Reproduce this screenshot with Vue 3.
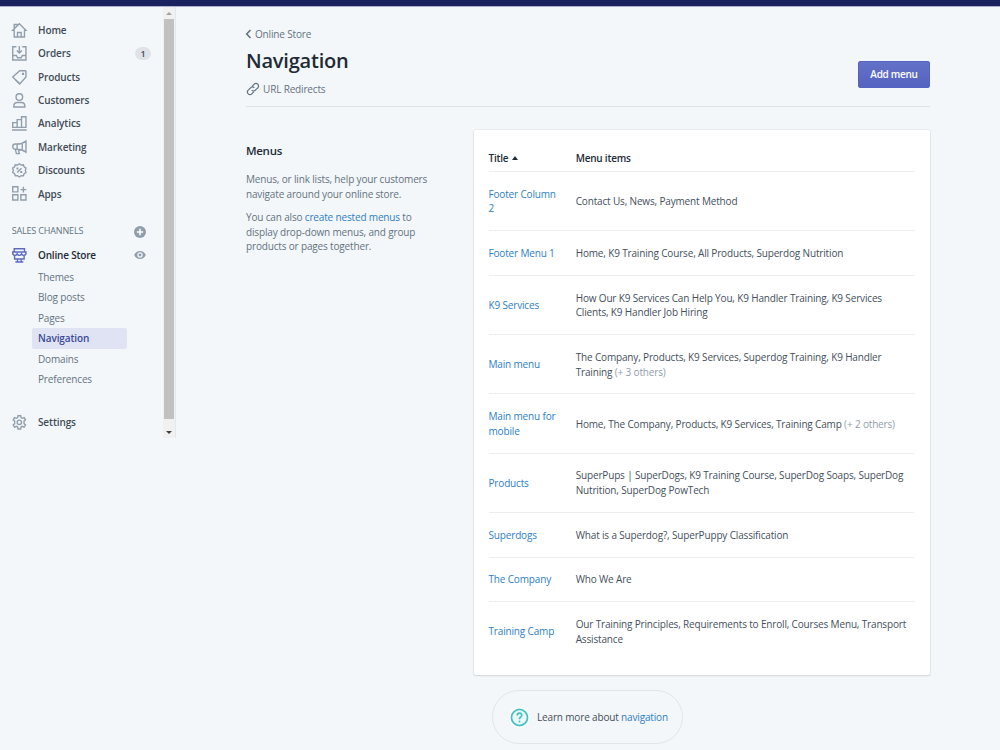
<template>
  <div class="app">
    <div class="topbar"></div>
    <div class="layout">
      <aside class="sidebar">
        <nav class="nav">
          <a class="nav-item" v-for="item in navList" :key="item.label">
            <svg class="nav-icon" viewBox="0 0 20 20">
              <path v-for="(d, i) in item.paths" :key="i" :d="d" />
            </svg>
            <span class="nav-label">{{ item.label }}</span>
            <span class="badge" v-if="item.badge">{{ item.badge }}</span>
          </a>

          <div class="section-title">
            <span>SALES CHANNELS</span>
            <svg class="small-icon" viewBox="0 0 16 16">
              <circle cx="8" cy="8" r="8" fill="#919eab" />
              <path d="M8 3.800v8.400M3.800 8h8.400" stroke="#fff" stroke-width="2" />
            </svg>
          </div>

          <a class="nav-item active">
            <svg class="nav-icon" viewBox="0 0 20 20">
              <path d="M3 1h14v4.500H3zM3 5.500H1V8q1 2 3 2t3-2q1 2 3 2t3-2q1 2 3 2t3-2V5.500h-2M3.500 10.500V15h13v-4.500M7.500 15v4M12.500 15v4M4.500 19h11" />
            </svg>
            <span class="nav-label">Online Store</span>
            <svg class="eye-icon" viewBox="0 0 18 14">
              <path fill="#919eab" fill-rule="evenodd" d="M9 1C4.500 1 1.500 4 .3 7c1.200 3 4.200 6 8.700 6s7.500-3 8.700-6C16.500 4 13.500 1 9 1zm0 10a4 4 0 1 1 0-8 4 4 0 0 1 0 8z" />
              <circle cx="9" cy="7" r="2.200" fill="#919eab" />
            </svg>
          </a>
          <div class="sub-nav">
            <a
              class="sub-item"
              v-for="item in subList"
              :key="item"
              :class="{ selected: item === 'Navigation' }"
              >{{ item }}</a
            >
          </div>

          <a class="nav-item settings">
            <svg class="nav-icon" viewBox="0 0 20 20">
              <path d="M8.200 1h3.600l.5 2.600 1.700.9 2.500-1 1.900 3-2 1.700v3.600l2 1.700-1.900 3-2.500-1-1.700.9-.5 2.600H8.200l-.5-2.600-1.700-.9-2.500 1-1.900-3 2-1.700V8.200l-2-1.700 1.900-3 2.500 1 1.700-.9z" />
              <circle cx="10" cy="10" r="3" />
            </svg>
            <span class="nav-label">Settings</span>
          </a>
        </nav>
        <div class="scrollbar">
          <i class="arrow up"></i>
          <div class="thumb"></div>
          <i class="arrow down"></i>
        </div>
      </aside>

      <main class="main">
        <header class="header">
          <div>
            <a class="breadcrumb">
              <svg class="chevron" viewBox="0 0 6 10">
                <path d="M5 1L1.200 5 5 9" />
              </svg>
              <span>Online Store</span>
            </a>
            <h1>Navigation</h1>
            <a class="redirects">
              <svg class="link-icon" viewBox="0 0 20 20">
                <path d="M9 5l3-3a3.800 3.800 0 0 1 6 6l-4 4a3.800 3.800 0 0 1-6 0M11 15l-3 3a3.800 3.800 0 0 1-6-6l4-4a3.800 3.800 0 0 1 6 0" />
              </svg>
              <span>URL Redirects</span>
            </a>
          </div>
          <button class="btn">Add menu</button>
        </header>

        <section class="content">
          <div class="description">
            <h2>Menus</h2>
            <p>Menus, or link lists, help your customers<br />navigate around your online store.</p>
            <p>
              You can also <a class="link">create nested menus</a> to<br />display drop-down menus, and
              group<br />products or pages together.
            </p>
          </div>

          <div class="card">
            <div class="row head">
              <div>Title <i class="sort"></i></div>
              <div>Menu items</div>
            </div>
            <div class="row" v-for="menu in menus" :key="menu.title">
              <a class="link title">{{ menu.title }}</a>
              <div class="items">
                <div v-for="(line, i) in menu.items" :key="i">
                  <span>{{ line }}</span>
                  <span class="others" v-if="menu.others && i === menu.items.length - 1"
                    >&nbsp;{{ menu.others }}</span
                  >
                </div>
              </div>
            </div>
          </div>
        </section>

        <footer class="help">
          <svg class="help-icon" viewBox="0 0 24 24">
            <circle cx="12" cy="12" r="12" fill="#fff" />
            <circle cx="12" cy="12" r="9.200" fill="#e9f8f7" stroke="#47c1bf" stroke-width="2" />
            <path d="M9.400 9.800Q9.400 7 12 7t2.600 2.500Q14.600 11 13 11.800q-1 .5-1 2.200" fill="none" stroke="#47c1bf" stroke-width="1.900" />
            <circle cx="12" cy="16.600" r="1.100" fill="#47c1bf" />
          </svg>
          <span>Learn more about <a class="link">navigation</a></span>
        </footer>
      </main>
    </div>
  </div>
</template>

<script setup>
import { ref } from "vue";

const navList = ref([
  {
    label: "Home",
    paths: ["M1 10l9-9 9 9h-2v9H3v-9zM3 8V2h4v2M7.500 19v-6h5v6"],
  },
  {
    label: "Orders",
    badge: 1,
    paths: ["M6 1H1v18h18V1h-5M1 13h5l1.500 3h5l1.500-3h5", "M10 0v9M6.500 6l3.500 3.500L13.500 6"],
  },
  {
    label: "Products",
    paths: ["M1 9.500L10.500 1H18q1 0 1 1v7.500L10.500 19z", "M5 13.500L11 19M14.500 4.700h1v1h-1z"],
  },
  {
    label: "Customers",
    paths: ["M10 1a4.500 4.500 0 1 0 0 9 4.500 4.500 0 0 0 0-9z", "M2.500 19v-2Q3 13 7 13h6q4 0 4.500 4v2z"],
  },
  {
    label: "Analytics",
    paths: ["M1 15.500V9h6v6.500zM7 15.500V5h6v10.500zM13 15.500V1h6v14.500zM0 19h20"],
  },
  {
    label: "Marketing",
    paths: ["M7 5.500H4.500a3.500 3.500 0 0 0 0 7H7zM7 5.500q7 0 12-4v15q-5-4-12-4M4.500 12.500L6 18.500h4l-1.500-6M14 4.500v9"],
  },
  {
    label: "Discounts",
    paths: [
      "M10 1l2.500 1.700 3-.2 1 2.800L19 7l-.8 3 .8 3-2.500 1.700-1 2.800-3-.2L10 19l-2.500-1.700-3 .2-1-2.800L1 13l.8-3L1 7l2.500-1.700 1-2.800 3 .2z",
      "M7 13l6-6M7 7.200h.8v.8H7zM12.200 12h.8v.8h-.8z",
    ],
  },
  {
    label: "Apps",
    paths: ["M1 1h7v7H1zM1 12h7v7H1zM12 12h7v7h-7zM15.500 1v8M11.500 5h8"],
  },
]);

const subList = ref(["Themes", "Blog posts", "Pages", "Navigation", "Domains", "Preferences"]);

const menus = ref([
  { title: "Footer Column\n2", items: ["Contact Us, News, Payment Method"] },
  { title: "Footer Menu 1", items: ["Home, K9 Training Course, All Products, Superdog Nutrition"] },
  {
    title: "K9 Services",
    items: [
      "How Our K9 Services Can Help You, K9 Handler Training, K9 Services",
      "Clients, K9 Handler Job Hiring",
    ],
  },
  {
    title: "Main menu",
    items: ["The Company, Products, K9 Services, Superdog Training, K9 Handler", "Training"],
    others: "(+ 3 others)",
  },
  {
    title: "Main menu for\nmobile",
    items: ["Home, The Company, Products, K9 Services, Training Camp"],
    others: "(+ 2 others)",
  },
  {
    title: "Products",
    items: [
      "SuperPups | SuperDogs, K9 Training Course, SuperDog Soaps, SuperDog",
      "Nutrition, SuperDog PowTech",
    ],
  },
  { title: "Superdogs", items: ["What is a Superdog?, SuperPuppy Classification"] },
  { title: "The Company", items: ["Who We Are"] },
  {
    title: "Training Camp",
    items: [
      "Our Training Principles, Requirements to Enroll, Courses Menu, Transport",
      "Assistance",
    ],
  },
]);
</script>

<style>
body {
  background: #f4f7f9;
}
</style>

<style scoped>
.app {
  height: 750px;
  overflow: hidden;
  background: #f4f7f9;
  font-family: "Open Sans", "Noto Sans", sans-serif;
  font-size: 10px;
  line-height: 14.7px;
  letter-spacing: -0.16px;
  color: #454f5b;
}
.topbar {
  height: 6px;
  background: #1c2260;
  border-bottom: 1px solid #aeb2cc;
}
.layout {
  display: flex;
}
.sidebar {
  display: flex;
  width: 176px;
  height: 431px;
  border-right: 1px solid #e4e8eb;
  box-sizing: border-box;
}
.nav {
  width: 163px;
  padding-top: 11.4px;
  box-sizing: border-box;
}
.nav-item {
  display: flex;
  align-items: center;
  height: 23.4px;
  padding: 0 12px 0 11.7px;
  font-weight: 600;
  letter-spacing: -0.1px;
  color: #414b57;
}
.nav-icon {
  width: 14.7px;
  height: 14.7px;
  margin-right: 11.6px;
  overflow: visible;
  fill: none;
  stroke: #919eab;
  stroke-width: 1.9;
}
.nav-label {
  flex: 1;
  padding-top: 0.3px;
}
.active {
  letter-spacing: -0.18px;
  color: #212b36;
}
.active .nav-icon {
  stroke: #5c6ac4;
}
.badge {
  width: 16px;
  height: 13px;
  line-height: 13px;
  border-radius: 7px;
  background: #dfe3e8;
  text-align: center;
  font-size: 9px;
}
.section-title {
  display: flex;
  align-items: center;
  justify-content: space-between;
  height: 24px;
  margin-top: 14px;
  padding: 0.4px 17px 0 11.7px;
  box-sizing: border-box;
  font-size: 9px;
  color: #637381;
}
.small-icon {
  width: 12px;
  height: 12px;
}
.eye-icon {
  width: 12px;
  height: 10px;
  margin-right: 5px;
}
.sub-nav {
  padding-left: 32px;
}
.sub-item {
  display: block;
  width: 89px;
  height: 20.5px;
  line-height: 20.5px;
  padding-left: 6px;
  border-radius: 2px;
  color: #637381;
}
.selected {
  background: #dfe3f3;
  color: #3c4896;
  font-weight: 600;
  letter-spacing: -0.1px;
}
.settings {
  margin-top: 20.3px;
}
.scrollbar {
  display: flex;
  flex-direction: column;
  align-items: center;
  justify-content: space-between;
  width: 12px;
  padding: 5px 1px 4px 0;
  box-sizing: border-box;
  background: #f1f1f1;
}
.thumb {
  width: 10px;
  height: 400px;
  margin: -5px 0 -1px;
  transform: translateY(-2px);
  background: #c1c1c1;
}
.arrow {
  border: 3px solid transparent;
}
.up {
  border-top: 0;
  border-bottom-color: #a3a3a3;
}
.down {
  border-bottom: 0;
  border-top-color: #404040;
}
.main {
  width: 684px;
  margin-left: 70px;
  padding-top: 20px;
}
.header {
  display: flex;
  align-items: flex-end;
  justify-content: space-between;
  height: 79px;
  border-bottom: 1px solid #dfe3e8;
}
.header > div {
  align-self: flex-start;
}
.breadcrumb,
.redirects {
  display: flex;
  align-items: center;
  color: #637381;
}
.chevron {
  width: 7px;
  height: 10px;
  margin: -1px 3px 0 -1px;
  fill: none;
  stroke: #637381;
  stroke-width: 1.6;
}
h1 {
  margin: 3.8px 0 7.7px;
  font-size: 20px;
  line-height: 29px;
  font-weight: 600;
  letter-spacing: -0.2px;
  color: #212b36;
}
.redirects {
  height: 14px;
}
.link-icon {
  width: 12px;
  height: 12px;
  margin: 0 4px 0 1px;
  overflow: visible;
  fill: none;
  stroke: #637381;
  stroke-width: 2;
}
.btn {
  width: 72px;
  height: 27px;
  margin-bottom: 18.5px;
  padding: 0;
  border: 1px solid #5563c1;
  border-radius: 2px;
  background: linear-gradient(#6371c7, #5563c1);
  color: #fff;
  font: 600 10px "Open Sans", sans-serif;
  letter-spacing: -0.3px;
}
.content {
  display: flex;
  margin-top: 23px;
}
.description {
  width: 228px;
  padding-top: 12px;
  color: #637381;
}
h2 {
  margin: 0 0 11.8px;
  font-size: 11.5px;
  line-height: 18px;
  font-weight: 600;
  letter-spacing: -0.3px;
  color: #212b36;
}
p {
  margin: 0 0 8.8px;
}
.link {
  color: #2d80c4;
}
.card {
  width: 456px;
  height: 545px;
  padding: 14px 16px 0 14.5px;
  box-sizing: border-box;
  border-radius: 2px;
  background: #fff;
  box-shadow: 0 0 0 1px rgba(63, 63, 68, 0.05), 0 1px 2px rgba(63, 63, 68, 0.13);
}
.row {
  display: grid;
  grid-template-columns: 87.2px 1fr;
  align-items: center;
  padding: 14.76px 0 14.14px;
  border-bottom: 1px solid #ebeef0;
  white-space: pre-line;
}
.row:last-child {
  border-bottom: 0;
}
.head {
  height: 27px;
  padding: 0;
  font-weight: 600;
  letter-spacing: -0.22px;
  color: #212b36;
}
.head > div {
  padding-top: 1px;
}
.sort {
  display: inline-block;
  margin-left: 1px;
  border: 3.5px solid transparent;
  border-top: 0;
  border-bottom: 4px solid #212b36;
  vertical-align: 2px;
}
.items {
  white-space: nowrap;
}
.others {
  color: #919eab;
}
.help {
  display: flex;
  align-items: center;
  width: 191px;
  height: 54px;
  margin: 15px 0 0 246px;
  padding-left: 16px;
  box-sizing: border-box;
  border: 1px solid #e1e5e9;
  border-radius: 27px;
}
.help-icon {
  width: 21px;
  height: 21px;
  margin-right: 7px;
}
</style>
